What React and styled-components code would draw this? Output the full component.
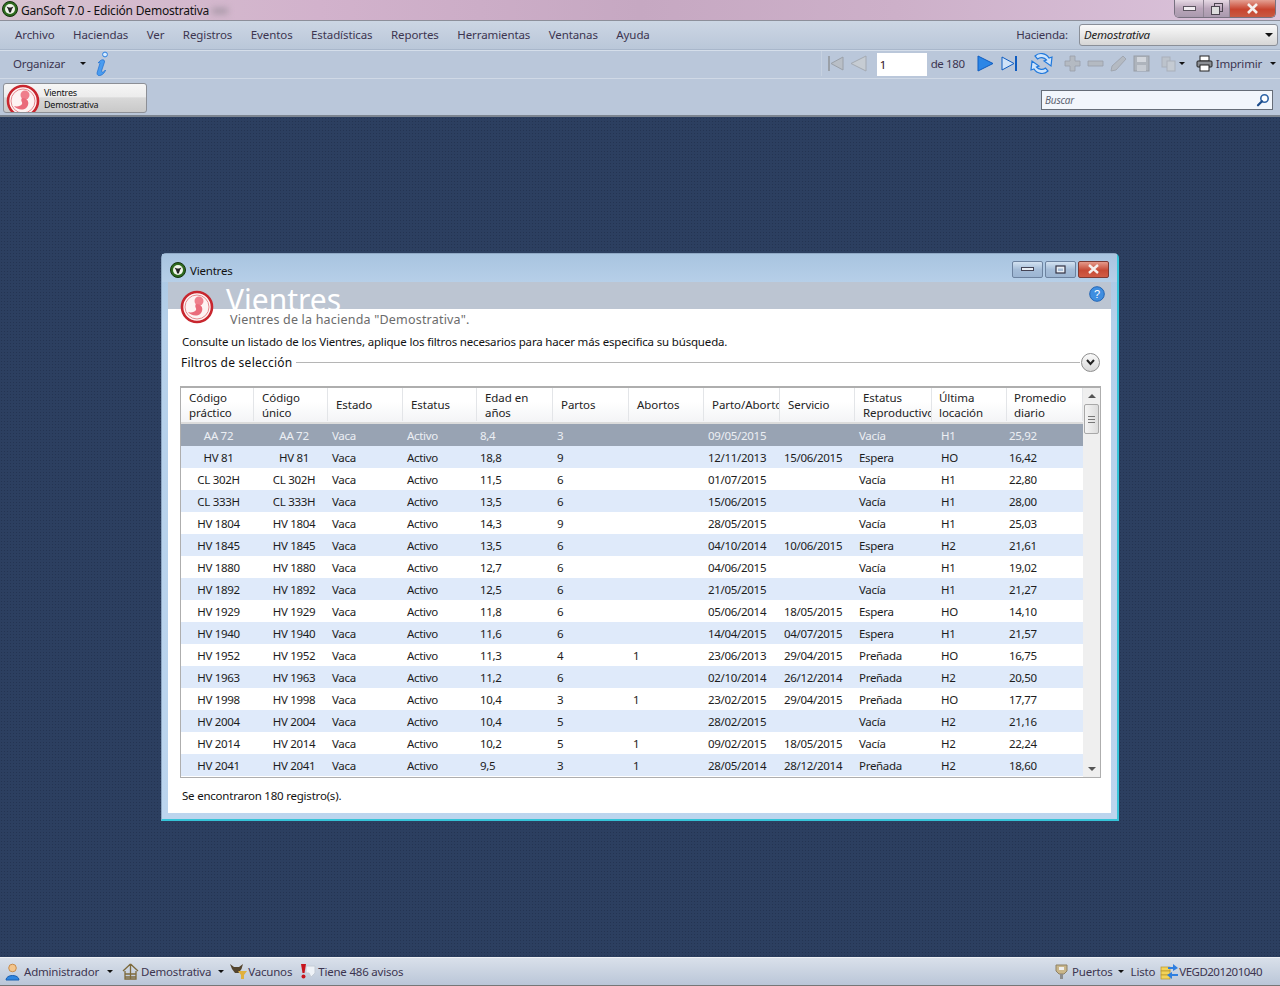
import styled, { createGlobalStyle } from "styled-components";

const Global = createGlobalStyle`
  html, body { margin: 0; padding: 0; height: 100%; overflow: hidden; }
  body { font-family: "Noto Sans", "Open Sans", sans-serif; font-size: 11.5px; letter-spacing: -0.2px; color: #222; }
  * { box-sizing: border-box; }
`;

const Screen = styled.div`
  display: flex;
  flex-direction: column;
  width: 1280px;
  height: 986px;
  overflow: hidden;
`;

const TitleBar = styled.div`
  display: flex;
  align-items: flex-start;
  height: 21px;
  padding: 1px 0 0 2px;
  background: linear-gradient(90deg, #d6c2cf 0%, #d2b2cc 25%, #c6a8c2 50%, #cdb0c9 70%, #dcc4dc 100%);
  border-bottom: 1px solid #8d8f9a;
`;

const AppTitle = styled.div`
  margin-left: 3px;
  font-size: 12px;
  line-height: 19px;
  color: #111;
`;

const Smudge = styled.div`
  width: 16px;
  height: 6px;
  margin: 7px 0 0 3px;
  background: #a999a8;
  filter: blur(3px);
`;

const WinControls = styled.div`
  display: flex;
  margin-left: auto;
  margin-right: 4px;
  margin-top: -1px;
  height: 18px;
  border: 1px solid #77707f;
  border-top: none;
  border-radius: 0 0 5px 5px;
  overflow: hidden;
`;

const WinButton = styled.div`
  display: flex;
  align-items: center;
  justify-content: center;
  width: ${(p) => p.$w}px;
  background: ${(p) =>
    p.$close
      ? "linear-gradient(#e4a093, #c8442f 55%, #c85a44)"
      : "linear-gradient(#e6d9e4, #bba6bb 50%, #a99aae)"};
  border-right: 1px solid #8f8493;
  &:last-child { border-right: none; }
`;

const MenuBar = styled.div`
  display: flex;
  align-items: center;
  height: 29px;
  padding: 0 0 1px 15px;
  background: linear-gradient(#ccd6e4, #bac7d9);
  border-bottom: 1px solid #a9b7cb;
  color: #3c3550;
`;

const MenuItem = styled.span`
  margin-right: 18.5px;
  letter-spacing: -0.1px;
`;

const Hacienda = styled.div`
  display: flex;
  align-items: center;
  margin-left: auto;
  margin-right: 2px;
`;

const Combo = styled.div`
  display: flex;
  align-items: center;
  justify-content: space-between;
  width: 199px;
  height: 22px;
  margin-left: 11px;
  padding: 0 4px;
  border: 1px solid #8a8f98;
  border-radius: 3px;
  background: linear-gradient(#fafafa, #e8e8e8 50%, #d6d6d6);
  font-style: italic;
  color: #222;
`;

const Caret = styled.i`
  display: inline-block;
  width: 0;
  height: 0;
  margin-left: ${(p) => p.$ml || 0}px;
  border-left: ${(p) => p.$s || 3}px solid transparent;
  border-right: ${(p) => p.$s || 3}px solid transparent;
  border-top: ${(p) => p.$s || 3}px solid #111;
`;

const ToolBar = styled.div`
  display: flex;
  align-items: center;
  height: 29px;
  padding: 0 0 2px 13px;
  background: #bac7da;
  border-top: 1px solid #d5deea;
  border-bottom: 1px solid #d0d9e6;
  color: #3c3550;
`;

const ToolGroup = styled.div`
  display: flex;
  align-items: center;
  height: 100%;
  margin-left: auto;
  padding: 0 4px 0 5px;
  border-left: 1px solid #c6d1e0;
`;

const Tool = styled.span`
  display: flex;
  align-items: center;
  margin-left: ${(p) => p.$ml || 0}px;
  white-space: nowrap;
`;

const PageCount = styled(Tool)`
  width: 34px;
  letter-spacing: -0.4px;
`;

const PageInput = styled.div`
  width: 50px;
  height: 23px;
  margin-top: 2px;
  padding: 0 3px;
  background: #fff;
  line-height: 23px;
  color: #301020;
`;

const TabBar = styled.div`
  display: flex;
  align-items: flex-end;
  justify-content: space-between;
  height: 38px;
  padding: 0 7px 2px 3px;
  background: #bac7da;
  border-bottom: 2px solid #7d8590;
`;

const TabButton = styled.div`
  display: flex;
  width: 144px;
  height: 30px;
  padding-left: 2px;
  border: 1px solid #8c8f96;
  border-radius: 3px;
  overflow: hidden;
  background: linear-gradient(#f6f6f6, #ececec 45%, #d8d8d8 50%, #c9c9c9);
`;

const TabText = styled.div`
  margin: 3px 0 0 4px;
  font-size: 9px;
  line-height: 12px;
  color: #111;
`;

const SearchBox = styled.div`
  display: flex;
  align-items: center;
  justify-content: space-between;
  width: 232px;
  height: 20px;
  margin-bottom: 3px;
  padding: 0 2px 0 3px;
  background: #f2f6fc;
  border: 1px solid #666d78;
  font-size: 10px;
  font-style: italic;
  color: #5d6472;
`;

const Desktop = styled.div`
  flex: 1;
  display: flex;
  align-items: center;
  justify-content: center;
  background-color: #2c3f60;
  background-image: radial-gradient(#243452 1px, transparent 1px);
  background-size: 3px 3px;
`;

const Window = styled.div`
  display: flex;
  flex-direction: column;
  width: 958px;
  height: 568px;
  padding: 0 6px 6px;
  background: linear-gradient(#a9c6e2, #b5d0ea 12%, #bcd5ee);
  border: 1px solid #8fa8c4;
  border-right: 2px solid #35c4d8;
  border-bottom: 2px solid #35c4d8;
  border-radius: 5px 5px 0 0;
`;

const WindowTitle = styled.div`
  display: flex;
  align-items: center;
  flex: none;
  height: 28px;
  margin: 0 -6px;
  padding: 4px 8px 0;
  background: linear-gradient(#a8c4e0, #b6cfe8);
  color: #111;
`;

const WindowTitleText = styled.span`
  margin-left: 4px;
`;

const WindowControls = styled.div`
  display: flex;
  gap: 2px;
  margin-top: -2px;
  margin-left: auto;
`;

const WindowButton = styled.div`
  display: flex;
  align-items: center;
  justify-content: center;
  width: 31px;
  height: 17px;
  border: 1px solid ${(p) => (p.$close ? "#7d3a33" : "#6d83a0")};
  border-radius: 2px;
  background: ${(p) =>
    p.$close
      ? "linear-gradient(#e59a8b, #c64a35 55%, #d05c46)"
      : "linear-gradient(#d3e2f1, #a5bdd8 50%, #9cb5d2)"};
`;

const Panel = styled.div`
  position: relative;
  flex: 1;
  background: #fff;
`;

const Band = styled.div`
  display: flex;
  justify-content: space-between;
  height: 27px;
  padding: 0 6px 0 58px;
  overflow: hidden;
  background: #bcc5d2;
`;

const BigTitle = styled.div`
  font-size: 30px;
  line-height: 36px;
  letter-spacing: 0;
  color: #fff;
`;

const HelpSlot = styled.div`
  padding-top: 4px;
`;

const PanelIcon = styled.div`
  position: absolute;
  top: 8px;
  left: 12px;
`;

const Subtitle = styled.div`
  height: 20px;
  margin-left: 62px;
  font-size: 12.5px;
  line-height: 22px;
  letter-spacing: 0.2px;
  color: #6b6b6b;
`;

const Description = styled.div`
  height: 18px;
  margin: 4px 0 0 14px;
  line-height: 18px;
  letter-spacing: -0.17px;
  color: #111;
`;

const FilterRow = styled.div`
  display: flex;
  align-items: center;
  height: 20px;
  margin: 1px 11px 0 13px;
  font-size: 12px;
  letter-spacing: 0.25px;
  color: #111;
`;

const FilterLine = styled.div`
  flex: 1;
  height: 1px;
  margin: 0 1px 0 3px;
  background: #b5b5b5;
`;

const Chevron = styled.div`
  display: flex;
  align-items: center;
  justify-content: center;
  width: 19px;
  height: 19px;
  border: 1px solid #8e8e8e;
  border-radius: 50%;
  background: linear-gradient(#fafafa, #d8d8d8);
`;

const TableBox = styled.div`
  display: flex;
  width: 921px;
  height: 392px;
  margin: 14px 0 0 12px;
  border: 1px solid #aeaeae;
  border-top-width: 2px;
`;

const TableMain = styled.div`
  width: 902px;
`;

const cols = "73px 74px 75px 74px 76px 76px 75px 76px 75px 77px 75px 76px";

const HeadRow = styled.div`
  display: grid;
  grid-template-columns: ${cols};
  height: 36px;
  padding-bottom: 1px;
  background: linear-gradient(#fff, #fff 40%, #f3f4f6);
  border-bottom: 2px solid #dcdcdc;
`;

const HeadCell = styled.div`
  display: flex;
  align-items: center;
  padding-left: ${(p) => p.$pad}px;
  overflow: hidden;
  border-right: 1px solid #e3e5e8;
  line-height: 15px;
  letter-spacing: -0.05px;
  white-space: pre;
  color: #222;
`;

const Row = styled.div`
  display: grid;
  grid-template-columns: ${cols};
  height: 22px;
  align-items: center;
  background: ${(p) => (p.$selected ? "#98a3b3" : p.$alt ? "#dfeafa" : "#fff")};
  color: ${(p) => (p.$selected ? "#eceff3" : "#1c1c1c")};
  letter-spacing: -0.3px;
`;

const Cell = styled.div`
  padding-left: ${(p) => p.$pad}px;
  text-align: ${(p) => (p.$center ? "center" : "left")};
  white-space: nowrap;
`;

const ScrollBar = styled.div`
  display: flex;
  flex-direction: column;
  align-items: center;
  width: 17px;
  height: 100%;
  background: #efefef;
`;

const ScrollEnd = styled.div`
  display: flex;
  flex: none;
  align-items: center;
  justify-content: center;
  height: 16px;
`;

const ScrollThumb = styled.div`
  display: flex;
  align-items: center;
  justify-content: center;
  width: 15px;
  height: 30px;
  border: 1px solid #a8a8a8;
  border-radius: 2px;
  background: linear-gradient(90deg, #f4f4f4, #dcdcdc);
`;

const Spacer = styled.div`
  flex: 1;
`;

const ThumbGrip = styled.div`
  width: 7px;
  height: 7px;
  border-top: 1px solid #777;
  border-bottom: 1px solid #777;
  background: linear-gradient(transparent 40%, #777 40%, #777 60%, transparent 60%);
`;

const UpArrow = styled.i`
  width: 0;
  height: 0;
  border-left: 4px solid transparent;
  border-right: 4px solid transparent;
  border-bottom: 4px solid #555;
`;

const DownArrow = styled.i`
  width: 0;
  height: 0;
  border-left: 4px solid transparent;
  border-right: 4px solid transparent;
  border-top: 4px solid #555;
`;

const Found = styled.div`
  margin: 9px 0 0 14px;
  line-height: 18px;
  letter-spacing: -0.22px;
  color: #111;
`;

const StatusBar = styled.div`
  display: flex;
  align-items: center;
  height: 29px;
  padding: 0 18px 0 5px;
  background: linear-gradient(#d9e0ea, #bac6d8);
  border-top: 1px solid #eef1f5;
  border-bottom: 1px solid #777;
  color: #3c3550;
`;

const StatusItem = styled.span`
  display: flex;
  align-items: center;
  margin-left: ${(p) => p.$ml || 0}px;
  margin-right: ${(p) => (p.$push ? "auto" : 0)};
  white-space: nowrap;
`;

const Label = styled.span`
  margin-left: ${(p) => p.$ml || 0}px;
`;

const Serial = styled.span`
  letter-spacing: -0.5px;
`;

const Logo = ({ size = 16 }) => (
  <svg width={size} height={size} viewBox="0 0 16 16">
    <circle cx="8" cy="8" r="7.5" fill="#2f6b1e" stroke="#16330f" />
    <circle cx="8" cy="8" r="5" fill="#f2f5ec" />
    <path d="M4.5 5.5 L7 6.5 H9 L11.5 5.5 L10 8 L8.8 11.5 H7.2 L6 8 Z" fill="#222" />
  </svg>
);

const Embryo = ({ size = 34 }) => (
  <svg width={size} height={size} viewBox="0 0 34 34">
    <circle cx="17" cy="17" r="15" fill="#fdf3f3" stroke="#c8262e" strokeWidth="2.6" />
    <circle cx="17" cy="17" r="12" fill="none" stroke="#e58a8f" strokeWidth="1" />
    <circle cx="19" cy="11" r="4.5" fill="#ef7f8c" />
    <path
      d="M16 14 C22 14 24 19 21 23 C18 27 11 26 8 22 C11 23 15 22 16 20 C17 18 14 17 16 14 Z"
      fill="#ea6b7b"
    />
  </svg>
);

const Tri = ({ dir = "right", bar, color = "#2c86e6", edge = "#0f5cc0", filled = true }) => (
  <svg width="17" height="17" viewBox="0 0 17 17">
    {dir === "right" ? (
      <path d={bar ? "M1 2 L13 8.5 L1 15 Z" : "M1 1 L16 8.5 L1 16 Z"} fill={filled ? color : "#cfe2f8"} stroke={edge} />
    ) : (
      <path d={bar ? "M16 2 L4 8.5 L16 15 Z" : "M16 1 L1 8.5 L16 16 Z"} fill={color} stroke={edge} />
    )}
    {bar && <rect x={dir === "right" ? 14 : 1} y="1" width="2" height="15" fill={edge} />}
  </svg>
);

const Refresh = () => (
  <svg width="25" height="25" viewBox="0 0 25 25">
    <path d="M6 5 C10 1 17 2 20 7 L23 6 L22 15 L15 10 L17.5 9 C15 6 11 6 8.5 8 Z" fill="#cfe4fb" stroke="#1f78dc" strokeWidth="1.2" />
    <path d="M19 20 C15 24 8 23 5 18 L2 19 L3 10 L10 15 L7.5 16 C10 19 14 19 16.5 17 Z" fill="#cfe4fb" stroke="#1f78dc" strokeWidth="1.2" />
  </svg>
);

const GreyIcon = ({ d }) => (
  <svg width="17" height="17" viewBox="0 0 17 17">
    <path d={d} fill="#b4bac2" stroke="#9aa0a8" strokeWidth="0.8" />
  </svg>
);

const SaveIcon = () => (
  <svg width="17" height="17" viewBox="0 0 17 17">
    <rect x="1" y="1" width="15" height="15" fill="#aeb4bc" stroke="#979da5" />
    <rect x="4" y="2" width="9" height="5" fill="#d2d6dc" />
    <rect x="4" y="10" width="9" height="6" fill="#c6cbd2" />
  </svg>
);

const CopyIcon = () => (
  <svg width="16" height="16" viewBox="0 0 16 16">
    <rect x="1" y="1" width="8" height="10" fill="#bcc3cc" stroke="#a9b0ba" />
    <rect x="6" y="5" width="8" height="10" fill="#c4cad2" stroke="#a9b0ba" />
  </svg>
);

const Printer = () => (
  <svg width="17" height="17" viewBox="0 0 17 17">
    <rect x="4" y="1" width="9" height="5" fill="#fff" stroke="#222" />
    <rect x="1" y="6" width="15" height="6" rx="1" fill="#8c8f94" stroke="#222" />
    <rect x="4" y="10" width="9" height="6" fill="#fff" stroke="#222" />
  </svg>
);

const InfoIcon = () => (
  <svg width="16" height="26" viewBox="0 0 16 26">
    <circle cx="11" cy="3.5" r="2.4" fill="#d8ecff" stroke="#2a7fe0" />
    <path d="M5 11 C7 8 11 8 10.5 11 L7.5 20 C7.5 22 10 21 11.5 19 C10.5 24 3 27 3 22 L6 12 C5.5 11 5 11.5 4 12 Z" fill="#4a9cf0" stroke="#1e6fd0" strokeWidth="0.7" />
  </svg>
);

const SearchIcon = () => (
  <svg width="14" height="14" viewBox="0 0 14 14">
    <circle cx="8.5" cy="5.5" r="3.7" fill="#fff" stroke="#2f64a6" strokeWidth="1.6" />
    <path d="M6 8.2 L2 12.3" stroke="#1d4d8c" strokeWidth="2.2" strokeLinecap="round" />
  </svg>
);

const HelpIcon = () => (
  <svg width="16" height="16" viewBox="0 0 16 16">
    <circle cx="8" cy="8" r="7.3" fill="#3f8ee0" stroke="#2265b5" />
    <text x="8" y="12" textAnchor="middle" fontSize="11" fontFamily="Liberation Sans, sans-serif" fill="#fff">?</text>
  </svg>
);

const ChevronDown = () => (
  <svg width="11" height="9" viewBox="0 0 11 9">
    <path d="M2 2 L5.5 6 L9 2" fill="none" stroke="#222" strokeWidth="2" />
  </svg>
);

const UserIcon = () => (
  <svg width="15" height="18" viewBox="0 0 15 18">
    <circle cx="7.5" cy="5" r="3.8" fill="#f3c58c" stroke="#c98c4a" />
    <path d="M1 17 C1 11 14 11 14 17 Z" fill="#2f86e0" stroke="#1a5fb0" />
  </svg>
);

const HouseIcon = () => (
  <svg width="17" height="17" viewBox="0 0 17 17">
    <path d="M8.5 1 L1 8 M8.5 1 L16 8 M3 8 V16 H14 V8 M8.5 1 V16 M3 11 H14 M3 14 H14" fill="none" stroke="#7d6a3c" strokeWidth="1.3" />
  </svg>
);

const BullIcon = () => (
  <svg width="19" height="17" viewBox="0 0 19 17">
    <path d="M1 1 L5 4 H10 L14 1 L12.5 6 L9.5 10 L6 10 L3 6 Z" fill="#54452e" />
    <path d="M9 8 H18 L15 12 V16 H12 V12 Z" fill="#e0b03c" />
  </svg>
);

const AlertIcon = () => (
  <svg width="17" height="17" viewBox="0 0 17 17">
    <path d="M7 3 H16 V10 L12 14 L10 10 H7 Z" fill="#eef2f7" stroke="#c5ccd6" />
    <path d="M2 1 H7 L5.5 10 H3.5 Z" fill="#c8141c" />
    <circle cx="4.5" cy="13.5" r="2" fill="#c8141c" />
  </svg>
);

const PortIcon = () => (
  <svg width="15" height="17" viewBox="0 0 15 17">
    <path d="M2 2 H13 V8 L10 11 H5 L2 8 Z" fill="#c9b68a" stroke="#8d8167" />
    <rect x="6" y="11" width="3" height="5" fill="#8d8d8d" />
    <rect x="5" y="4" width="5" height="3" fill="#eee" />
  </svg>
);

const SyncIcon = () => (
  <svg width="19" height="17" viewBox="0 0 19 17">
    <rect x="1" y="4" width="9" height="4" fill="#f2d35a" stroke="#b8942a" strokeWidth="0.7" />
    <rect x="1" y="8" width="9" height="4" fill="#f2d35a" stroke="#b8942a" strokeWidth="0.7" />
    <rect x="1" y="12" width="9" height="4" fill="#f2d35a" stroke="#b8942a" strokeWidth="0.7" />
    <path d="M8 4 H13 V1 L18 5 L13 8 V6 H8 Z" fill="#2f7fe0" />
    <path d="M18 11 H12 V9 L7 12 L12 16 V13 H18 Z" fill="#2f7fe0" />
  </svg>
);

const menus = ["Archivo", "Haciendas", "Ver", "Registros", "Eventos", "Estadísticas", "Reportes", "Herramientas", "Ventanas", "Ayuda"];

const heads = [
  "Código\npráctico", "Código\núnico", "Estado", "Estatus", "Edad en\naños", "Partos",
  "Abortos", "Parto/Aborto", "Servicio", "Estatus\nReproductivo", "Última\nlocación", "Promedio\ndiario",
];

// padding of each body column, the first two are centered
const pads = [2, 6, 4, 4, 3, 4, 4, 4, 4, 4, 9, 2];

const rows = [
  ["AA 72", "8,4", "3", "", "09/05/2015", "", "Vacía", "H1", "25,92"],
  ["HV 81", "18,8", "9", "", "12/11/2013", "15/06/2015", "Espera", "HO", "16,42"],
  ["CL 302H", "11,5", "6", "", "01/07/2015", "", "Vacía", "H1", "22,80"],
  ["CL 333H", "13,5", "6", "", "15/06/2015", "", "Vacía", "H1", "28,00"],
  ["HV 1804", "14,3", "9", "", "28/05/2015", "", "Vacía", "H1", "25,03"],
  ["HV 1845", "13,5", "6", "", "04/10/2014", "10/06/2015", "Espera", "H2", "21,61"],
  ["HV 1880", "12,7", "6", "", "04/06/2015", "", "Vacía", "H1", "19,02"],
  ["HV 1892", "12,5", "6", "", "21/05/2015", "", "Vacía", "H1", "21,27"],
  ["HV 1929", "11,8", "6", "", "05/06/2014", "18/05/2015", "Espera", "HO", "14,10"],
  ["HV 1940", "11,6", "6", "", "14/04/2015", "04/07/2015", "Espera", "H1", "21,57"],
  ["HV 1952", "11,3", "4", "1", "23/06/2013", "29/04/2015", "Preñada", "HO", "16,75"],
  ["HV 1963", "11,2", "6", "", "02/10/2014", "26/12/2014", "Preñada", "H2", "20,50"],
  ["HV 1998", "10,4", "3", "1", "23/02/2015", "29/04/2015", "Preñada", "HO", "17,77"],
  ["HV 2004", "10,4", "5", "", "28/02/2015", "", "Vacía", "H2", "21,16"],
  ["HV 2014", "10,2", "5", "1", "09/02/2015", "18/05/2015", "Vacía", "H2", "22,24"],
  ["HV 2041", "9,5", "3", "1", "28/05/2014", "28/12/2014", "Preñada", "H2", "18,60"],
];

const App = () => {
  return (
    <Screen>
      <Global />
      <TitleBar>
        <Logo />
        <AppTitle>GanSoft 7.0 - Edición Demostrativa</AppTitle>
        <Smudge />
        <WinControls>
          <WinButton $w={29}>
            <svg width="13" height="6"><rect x="0.5" y="0.5" width="12" height="4" fill="#f2eef2" stroke="#5c5560" /></svg>
          </WinButton>
          <WinButton $w={26}>
            <svg width="12" height="12"><rect x="3.5" y="0.5" width="8" height="8" fill="none" stroke="#4c4550" /><rect x="0.5" y="3.5" width="8" height="8" fill="#ddd" stroke="#4c4550" /></svg>
          </WinButton>
          <WinButton $w={45} $close>
            <svg width="13" height="11"><path d="M2 1 L11 10 M11 1 L2 10" stroke="#f5f0ee" strokeWidth="2.6" /></svg>
          </WinButton>
        </WinControls>
      </TitleBar>

      <MenuBar>
        {menus.map((m) => (
          <MenuItem key={m}>{m}</MenuItem>
        ))}
        <Hacienda>
          Hacienda:
          <Combo>
            Demostrativa
            <Caret $s={4} />
          </Combo>
        </Hacienda>
      </MenuBar>

      <ToolBar>
        Organizar
        <Caret $ml={15} />
        <Tool $ml={8}><InfoIcon /></Tool>
        <ToolGroup>
          <Tri dir="left" bar color="#b9bfc7" edge="#9aa0a8" />
          <Tool $ml={6}><Tri dir="left" color="#c6ccd3" edge="#a4aab2" /></Tool>
          <Tool $ml={10}><PageInput>1</PageInput></Tool>
          <PageCount $ml={4}>de 180</PageCount>
          <Tool $ml={12}><Tri /></Tool>
          <Tool $ml={7}><Tri bar filled={false} /></Tool>
          <Tool $ml={11}><Refresh /></Tool>
          <Tool $ml={10}><GreyIcon d="M6 1 H11 V6 H16 V11 H11 V16 H6 V11 H1 V6 H6 Z" /></Tool>
          <Tool $ml={6}><GreyIcon d="M1 6 H16 V11 H1 Z" /></Tool>
          <Tool $ml={6}><GreyIcon d="M13 1 L16 4 L6 15 L1 16 L2 11 Z" /></Tool>
          <Tool $ml={6}><SaveIcon /></Tool>
          <Tool $ml={11}><CopyIcon /></Tool>
          <Caret $ml={2} />
          <Tool $ml={11}><Printer /></Tool>
          <Tool $ml={3}>Imprimir</Tool>
          <Caret $ml={8} />
        </ToolGroup>
      </ToolBar>

      <TabBar>
        <TabButton>
          <Embryo />
          <TabText>Vientres<br />Demostrativa</TabText>
        </TabButton>
        <SearchBox>
          Buscar
          <SearchIcon />
        </SearchBox>
      </TabBar>

      <Desktop>
        <Window>
          <WindowTitle>
            <Logo />
            <WindowTitleText>Vientres</WindowTitleText>
            <WindowControls>
              <WindowButton>
                <svg width="13" height="5"><rect x="0.5" y="0.5" width="12" height="3" fill="#e8eef5" stroke="#445" /></svg>
              </WindowButton>
              <WindowButton>
                <svg width="11" height="9"><rect x="1" y="1" width="9" height="7" fill="#e8eef5" stroke="#334" strokeWidth="1.2" /><rect x="3" y="3.5" width="5" height="2.5" fill="#a5bdd8" /></svg>
              </WindowButton>
              <WindowButton $close>
                <svg width="13" height="10"><path d="M2 1 L11 9 M11 1 L2 9" stroke="#f5f0ee" strokeWidth="2.4" /></svg>
              </WindowButton>
            </WindowControls>
          </WindowTitle>

          <Panel>
            <Band>
              <BigTitle>Vientres</BigTitle>
              <HelpSlot><HelpIcon /></HelpSlot>
            </Band>
            <PanelIcon><Embryo /></PanelIcon>
            <Subtitle>Vientres de la hacienda "Demostrativa".</Subtitle>
            <Description>Consulte un listado de los Vientres, aplique los filtros necesarios para hacer más especifica su búsqueda.</Description>
            <FilterRow>
              Filtros de selección
              <FilterLine />
              <Chevron><ChevronDown /></Chevron>
            </FilterRow>

            <TableBox>
              <TableMain>
                <HeadRow>
                  {heads.map((h, i) => (
                    <HeadCell key={h} $pad={i > 9 ? 7 : 8}>{h}</HeadCell>
                  ))}
                </HeadRow>
                {rows.map((r, i) => {
                  const cells = [r[0], r[0], "Vaca", "Activo", ...r.slice(1)];
                  return (
                    <Row key={r[0]} $selected={i === 0} $alt={i % 2 === 1}>
                      {cells.map((c, j) => (
                        <Cell key={j} $center={j < 2} $pad={pads[j]}>{c}</Cell>
                      ))}
                    </Row>
                  );
                })}
              </TableMain>
              <ScrollBar>
                <ScrollEnd><UpArrow /></ScrollEnd>
                <ScrollThumb><ThumbGrip /></ScrollThumb>
                <Spacer />
                <ScrollEnd><DownArrow /></ScrollEnd>
              </ScrollBar>
            </TableBox>

            <Found>Se encontraron 180 registro(s).</Found>
          </Panel>
        </Window>
      </Desktop>

      <StatusBar>
        <UserIcon />
        <Label $ml={4}>Administrador</Label>
        <Caret $ml={8} />
        <StatusItem $ml={9}><HouseIcon /><Label $ml={2}>Demostrativa</Label></StatusItem>
        <Caret $ml={7} />
        <StatusItem $ml={5}><BullIcon /><Label>Vacunos</Label></StatusItem>
        <StatusItem $ml={7} $push><AlertIcon /><Label $ml={2}>Tiene 486 avisos</Label></StatusItem>
        <StatusItem><PortIcon /><Label $ml={3}>Puertos</Label></StatusItem>
        <Caret $ml={5} />
        <StatusItem $ml={7}>Listo</StatusItem>
        <StatusItem $ml={5}><SyncIcon /><Serial>VEGD201201040</Serial></StatusItem>
      </StatusBar>
    </Screen>
  );
};

export default App;
